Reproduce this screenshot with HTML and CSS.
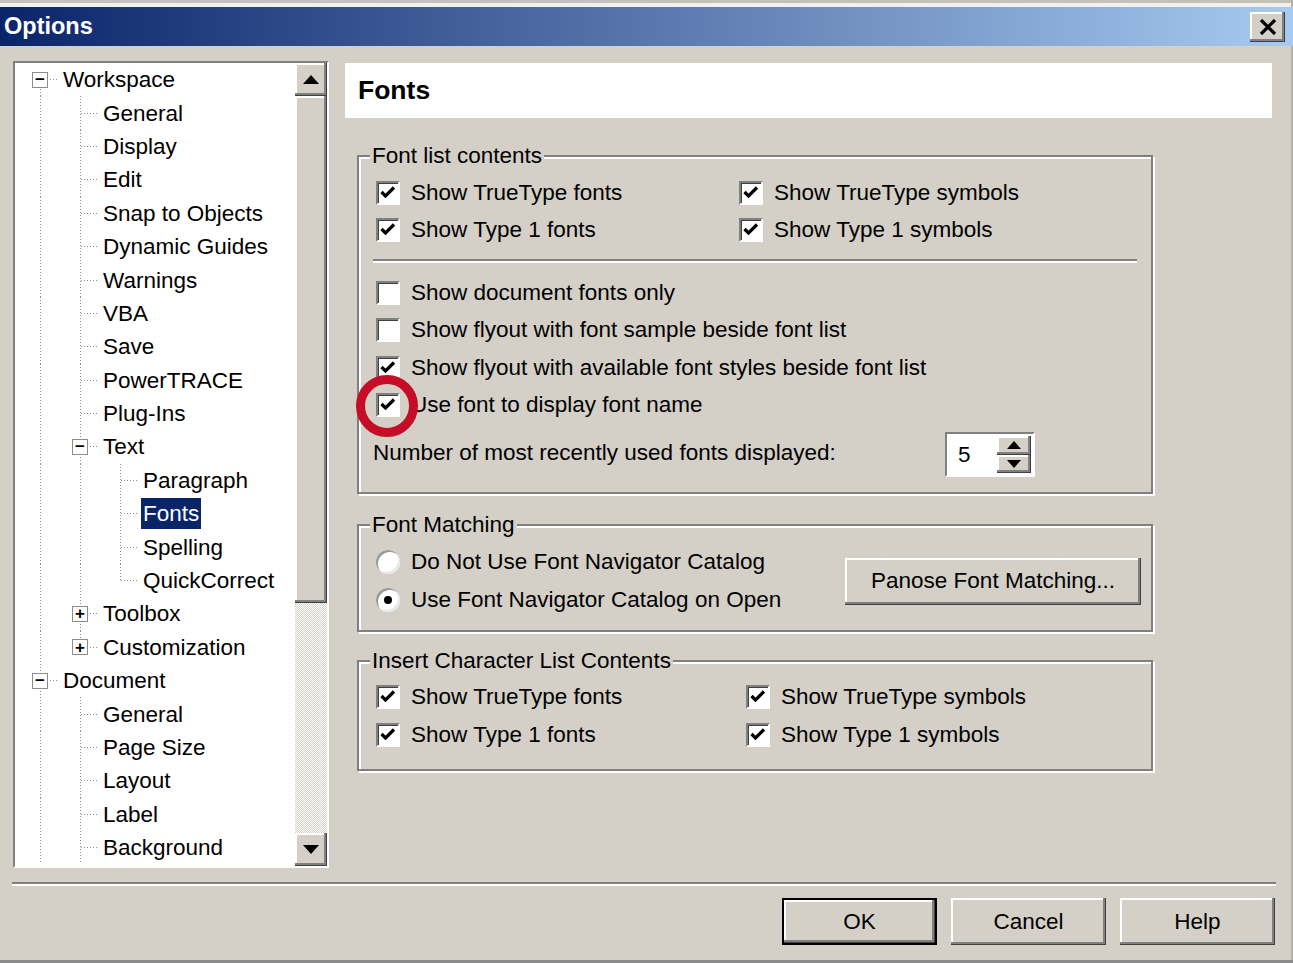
FILE: index.html
```html
<!DOCTYPE html>
<html>
  <head>
    <title>Options</title>
    <link rel="stylesheet" href="styles.css">
  </head>

  <body>
    <div class="window">
      <div class="titlebar">
        <span class="title">Options</span>
        <span class="close-btn">
          <svg width="18" height="16" viewBox="0 0 18 16"><path d="M2 1l14 14M16 1L2 15" stroke="#000" stroke-width="3.2" fill="none"/></svg>
        </span>
      </div>

      <div class="main">
        <!-- category tree -->
        <div class="tree">
          <div class="tree-list">
            <div class="node"><span class="cell top"><span class="expander">&minus;</span></span><span class="label">Workspace</span></div>
            <div class="node"><span class="cell pipe"></span><span class="cell tee"></span><span class="label">General</span></div>
            <div class="node"><span class="cell pipe"></span><span class="cell tee"></span><span class="label">Display</span></div>
            <div class="node"><span class="cell pipe"></span><span class="cell tee"></span><span class="label">Edit</span></div>
            <div class="node"><span class="cell pipe"></span><span class="cell tee"></span><span class="label">Snap to Objects</span></div>
            <div class="node"><span class="cell pipe"></span><span class="cell tee"></span><span class="label">Dynamic Guides</span></div>
            <div class="node"><span class="cell pipe"></span><span class="cell tee"></span><span class="label">Warnings</span></div>
            <div class="node"><span class="cell pipe"></span><span class="cell tee"></span><span class="label">VBA</span></div>
            <div class="node"><span class="cell pipe"></span><span class="cell tee"></span><span class="label">Save</span></div>
            <div class="node"><span class="cell pipe"></span><span class="cell tee"></span><span class="label">PowerTRACE</span></div>
            <div class="node"><span class="cell pipe"></span><span class="cell tee"></span><span class="label">Plug-Ins</span></div>
            <div class="node"><span class="cell pipe"></span><span class="cell tee"><span class="expander">&minus;</span></span><span class="label">Text</span></div>
            <div class="node"><span class="cell pipe"></span><span class="cell pipe"></span><span class="cell tee"></span><span class="label">Paragraph</span></div>
            <div class="node"><span class="cell pipe"></span><span class="cell pipe"></span><span class="cell tee"></span><span class="label selected">Fonts</span></div>
            <div class="node"><span class="cell pipe"></span><span class="cell pipe"></span><span class="cell tee"></span><span class="label">Spelling</span></div>
            <div class="node"><span class="cell pipe"></span><span class="cell pipe"></span><span class="cell ell"></span><span class="label">QuickCorrect</span></div>
            <div class="node"><span class="cell pipe"></span><span class="cell tee"><span class="expander">+</span></span><span class="label">Toolbox</span></div>
            <div class="node"><span class="cell pipe"></span><span class="cell ell"><span class="expander">+</span></span><span class="label">Customization</span></div>
            <div class="node"><span class="cell tee"><span class="expander">&minus;</span></span><span class="label">Document</span></div>
            <div class="node"><span class="cell pipe"></span><span class="cell tee"></span><span class="label">General</span></div>
            <div class="node"><span class="cell pipe"></span><span class="cell tee"></span><span class="label">Page Size</span></div>
            <div class="node"><span class="cell pipe"></span><span class="cell tee"></span><span class="label">Layout</span></div>
            <div class="node"><span class="cell pipe"></span><span class="cell tee"></span><span class="label">Label</span></div>
            <div class="node"><span class="cell pipe"></span><span class="cell tee"></span><span class="label">Background</span></div>
          </div>
          <div class="vscroll">
            <span class="raised sbtn"><svg width="16" height="9" viewBox="0 0 16 9"><path d="M8 0L16 9H0z"/></svg></span>
            <span class="raised thumb"></span>
            <span class="track"></span>
            <span class="raised sbtn"><svg width="16" height="9" viewBox="0 0 16 9"><path d="M0 0H16L8 9z"/></svg></span>
          </div>
        </div>

        <!-- settings page -->
        <div class="page">
          <div class="page-head">Fonts</div>

          <div class="group group-list">
            <div class="legend">Font list contents</div>
            <div class="pair pair-list">
              <div class="check"><span class="box"><svg width="20" height="20" viewBox="0 0 20 20"><path d="M3.5 9l4 4 8.5-8.5" stroke="#000" stroke-width="3.2" fill="none"/></svg></span>Show TrueType fonts</div>
              <div class="check"><span class="box"><svg width="20" height="20" viewBox="0 0 20 20"><path d="M3.5 9l4 4 8.5-8.5" stroke="#000" stroke-width="3.2" fill="none"/></svg></span>Show TrueType symbols</div>
              <div class="check"><span class="box"><svg width="20" height="20" viewBox="0 0 20 20"><path d="M3.5 9l4 4 8.5-8.5" stroke="#000" stroke-width="3.2" fill="none"/></svg></span>Show Type 1 fonts</div>
              <div class="check"><span class="box"><svg width="20" height="20" viewBox="0 0 20 20"><path d="M3.5 9l4 4 8.5-8.5" stroke="#000" stroke-width="3.2" fill="none"/></svg></span>Show Type 1 symbols</div>
            </div>
            <div class="etched"></div>
            <div class="check"><span class="box"></span>Show document fonts only</div>
            <div class="check"><span class="box"></span>Show flyout with font sample beside font list</div>
            <div class="check"><span class="box"><svg width="20" height="20" viewBox="0 0 20 20"><path d="M3.5 9l4 4 8.5-8.5" stroke="#000" stroke-width="3.2" fill="none"/></svg></span>Show flyout with available font styles beside font list</div>
            <div class="check"><span class="box"><span class="ring"></span><svg width="20" height="20" viewBox="0 0 20 20"><path d="M3.5 9l4 4 8.5-8.5" stroke="#000" stroke-width="3.2" fill="none"/></svg></span>Use font to display font name</div>
            <div class="recent">
              <span class="recent-label">Number of most recently used fonts displayed:</span>
              <span class="spin">
                <span class="spin-value">5</span>
                <span class="spin-arrows">
                  <span class="raised"><svg width="14" height="8" viewBox="0 0 14 8"><path d="M7 0L14 8H0z"/></svg></span>
                  <span class="raised"><svg width="14" height="8" viewBox="0 0 14 8"><path d="M0 0H14L7 8z"/></svg></span>
                </span>
              </span>
            </div>
          </div>

          <div class="group group-match">
            <div class="legend">Font Matching</div>
            <div class="match-row">
              <div>
                <div class="check"><span class="radio"></span>Do Not Use Font Navigator Catalog</div>
                <div class="check"><span class="radio on"></span>Use Font Navigator Catalog on Open</div>
              </div>
              <span class="raised button panose">Panose Font Matching...</span>
            </div>
          </div>

          <div class="group group-insert">
            <div class="legend">Insert Character List Contents</div>
            <div class="pair pair-insert">
              <div class="check"><span class="box"><svg width="20" height="20" viewBox="0 0 20 20"><path d="M3.5 9l4 4 8.5-8.5" stroke="#000" stroke-width="3.2" fill="none"/></svg></span>Show TrueType fonts</div>
              <div class="check"><span class="box"><svg width="20" height="20" viewBox="0 0 20 20"><path d="M3.5 9l4 4 8.5-8.5" stroke="#000" stroke-width="3.2" fill="none"/></svg></span>Show TrueType symbols</div>
              <div class="check"><span class="box"><svg width="20" height="20" viewBox="0 0 20 20"><path d="M3.5 9l4 4 8.5-8.5" stroke="#000" stroke-width="3.2" fill="none"/></svg></span>Show Type 1 fonts</div>
              <div class="check"><span class="box"><svg width="20" height="20" viewBox="0 0 20 20"><path d="M3.5 9l4 4 8.5-8.5" stroke="#000" stroke-width="3.2" fill="none"/></svg></span>Show Type 1 symbols</div>
            </div>
          </div>
        </div>
      </div>

      <div class="etched bottom-sep"></div>

      <div class="actions">
        <span class="raised button default">OK</span>
        <span class="raised button">Cancel</span>
        <span class="raised button">Help</span>
      </div>
    </div>
  </body>
</html>
```

FILE: styles.css
```css
body {
  margin: 0;
  font-family: "Liberation Sans", Arial, sans-serif;
  font-size: 22.5px;
  color: #000;
}

.window {
  width: 1293px;
  height: 963px;
  box-sizing: border-box;
  padding-top: 7px;
  background: linear-gradient(#c4c1ba 0 3px, #f2f1ed 3px 7px, #d4d0c8 7px);
  box-shadow: inset 0 -3px #8a8a8a, inset -2px 0 #b4b0a8;
}

/* title bar */
.titlebar {
  height: 39px;
  display: flex;
  align-items: center;
  justify-content: space-between;
  background: linear-gradient(90deg, #0a246a, #a6caf0);
}
.title {
  padding-left: 4px;
  color: #fff;
  font-weight: 700;
  font-size: 23.5px;
}
.close-btn {
  width: 35px;
  height: 30px;
  margin-right: 8px;
  display: flex;
  align-items: center;
  justify-content: center;
  background: #d4d0c8;
  box-shadow: inset -1px -1px #404040, inset -3px -3px #808080, inset 2px 2px #fff;
}

.raised {
  background: #d4d0c8;
  box-shadow: inset -1px -1px #404040, inset -3px -3px #808080, inset 2px 2px #fff;
}

.main {
  display: flex;
  padding: 15px 0 0 13px;
}

/* tree */
.tree {
  width: 316px;
  height: 807px;
  box-sizing: border-box;
  display: flex;
  border: 2px solid;
  border-color: #808080 #fff #fff #808080;
}
.tree-list {
  width: 280px;
  background: #fff;
  padding-left: 5px;
  box-sizing: border-box;
  overflow: hidden;
}
.node {
  height: 33.4px;
  display: flex;
  align-items: center;
  white-space: nowrap;
}
.cell {
  width: 40px;
  height: 100%;
  flex: none;
  display: flex;
  align-items: center;
  justify-content: center;
}
.pipe {
  background: repeating-linear-gradient(#8c8c8c 0 1px, transparent 1px 3px) 20px 0 / 1px 100% no-repeat;
}
.tee {
  background:
    repeating-linear-gradient(#8c8c8c 0 1px, transparent 1px 3px) 20px 0 / 1px 100% no-repeat,
    repeating-linear-gradient(90deg, #8c8c8c 0 1px, transparent 1px 3px) 21px 50% / 18px 1px no-repeat;
}
.ell {
  background:
    repeating-linear-gradient(#8c8c8c 0 1px, transparent 1px 3px) 20px 0 / 1px 50% no-repeat,
    repeating-linear-gradient(90deg, #8c8c8c 0 1px, transparent 1px 3px) 21px 50% / 18px 1px no-repeat;
}
.top {
  background:
    repeating-linear-gradient(#8c8c8c 0 1px, transparent 1px 3px) 20px 100% / 1px 50% no-repeat,
    repeating-linear-gradient(90deg, #8c8c8c 0 1px, transparent 1px 3px) 21px 50% / 18px 1px no-repeat;
}
.expander {
  width: 16px;
  height: 16px;
  box-sizing: border-box;
  border: 1px solid #8c8c8c;
  background: #fff;
  display: flex;
  align-items: center;
  justify-content: center;
  font-size: 17px;
  font-weight: 700;
  line-height: 1;
}
.label {
  margin-left: 1px;
  padding: 0 2px;
  line-height: 31px;
}
.selected {
  background: #0a246a;
  color: #fff;
}

.vscroll {
  width: 32px;
  display: flex;
  flex-direction: column;
}
.sbtn {
  height: 33px;
  display: flex;
  align-items: center;
  justify-content: center;
}
.thumb {
  height: 507px;
}
.track {
  flex: 1;
  background: repeating-conic-gradient(#d4d0c8 0 25%, #fff 0 50%) 0 0 / 2px 2px;
}

/* right page */
.page {
  width: 927px;
  margin-left: 16px;
  padding-top: 2px;
}
.page-head {
  height: 55px;
  background: #fff;
  padding-left: 13px;
  display: flex;
  align-items: center;
  font-weight: 700;
  font-size: 26.5px;
}
.group {
  width: 796px;
  margin-left: 12px;
  box-sizing: border-box;
  border: 2px solid #808080;
  box-shadow: inset 2px 2px #fff, 2px 2px #fff;
  padding-left: 17px;
}
.legend {
  display: table;
  margin: -14px 0 5px -6px;
  padding: 0 2px;
  line-height: 26px;
  background: #d4d0c8;
}
.group-list {
  height: 339px;
  margin-top: 37px;
}
.group-match {
  height: 108px;
  margin-top: 30px;
}
.group-insert {
  height: 111px;
  margin-top: 28px;
}
.group-insert .legend {
  margin-bottom: 4px;
}

.pair {
  display: grid;
}
.pair-list {
  grid-template-columns: 363px 1fr;
}
.pair-insert {
  grid-template-columns: 370px 1fr;
}
.check {
  height: 37.5px;
  display: flex;
  align-items: center;
  gap: 11px;
  white-space: nowrap;
}
.group-match .check,
.group-insert .check {
  height: 38px;
}
.box {
  position: relative;
  width: 24px;
  height: 24px;
  box-sizing: border-box;
  flex: none;
  border: 2px solid;
  border-color: #808080 #fff #fff #808080;
  background: #fff;
  box-shadow: inset 1px 1px #404040;
}
.box svg {
  position: relative;
  display: block;
}
/* red highlight round the checkbox */
.ring {
  position: absolute;
  left: -22px;
  top: -20px;
  width: 62px;
  height: 62px;
  box-sizing: border-box;
  border: 9px solid #c50d27;
  border-radius: 50%;
}
.radio {
  width: 24px;
  height: 24px;
  flex: none;
  border-radius: 50%;
  background: #fff;
  box-shadow: inset 2px 2px #9a9a9a, inset -2px -2px #e8e8e8;
  display: flex;
  align-items: center;
  justify-content: center;
}
.radio.on::after {
  content: "";
  width: 8px;
  height: 8px;
  border-radius: 50%;
  background: #000;
}

.etched {
  height: 2px;
  background: #808080;
  border-bottom: 2px solid #fff;
}
.group-list .etched {
  margin: 10px 14px 11px -3px;
}

.recent {
  height: 45px;
  margin-top: 8px;
  display: flex;
  align-items: center;
}
.recent-label {
  width: 572px;
  margin-left: -3px;
  margin-top: -4px;
}
.spin {
  width: 90px;
  height: 45px;
  box-sizing: border-box;
  display: flex;
  border: 2px solid;
  border-color: #808080 #fff #fff #808080;
  background: #fff;
  padding: 2px 2px 2px 0;
}
.spin-value {
  flex: 1;
  padding-left: 11px;
  display: flex;
  align-items: center;
}
.spin-arrows {
  width: 34px;
  display: flex;
  flex-direction: column;
}
.spin-arrows span {
  flex: 1;
  display: flex;
  align-items: center;
  justify-content: center;
}

.match-row {
  display: flex;
  align-items: center;
}
.button {
  height: 47px;
  display: flex;
  align-items: center;
  justify-content: center;
  white-space: nowrap;
}
.panose {
  width: 296px;
  margin-left: auto;
  margin-right: 10px;
}

.bottom-sep {
  margin: 14px 17px 0 12px;
}
.actions {
  display: flex;
  justify-content: flex-end;
  gap: 14px;
  margin-top: 12px;
  padding-right: 18px;
}
.actions .button {
  width: 155px;
}
.default {
  box-sizing: border-box;
  border: 2px solid #000;
}
```
